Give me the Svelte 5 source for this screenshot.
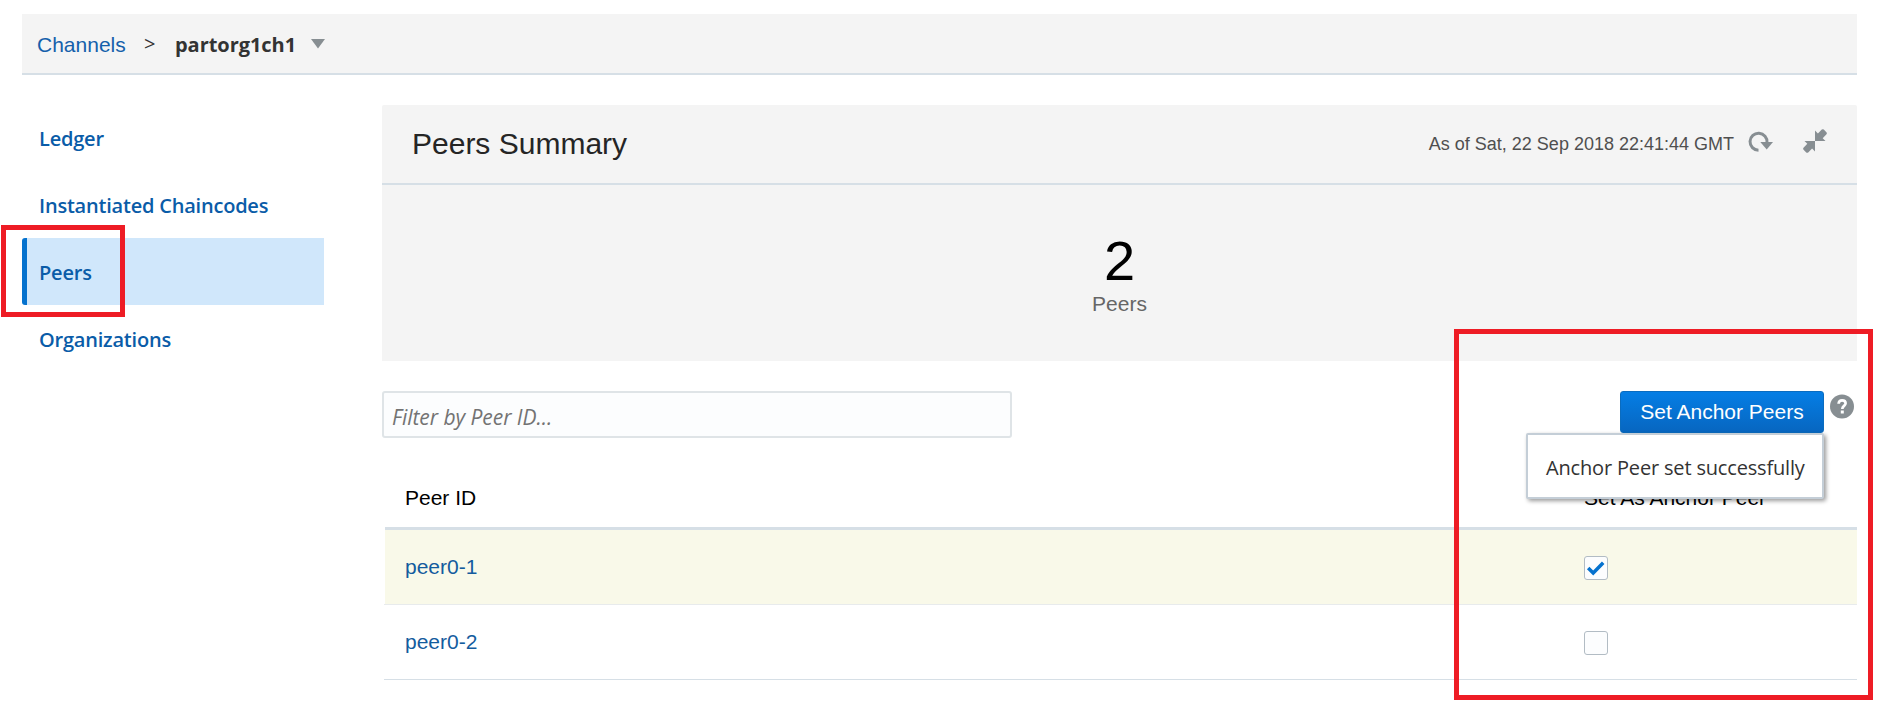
<script>
  const nav = ['Ledger', 'Instantiated Chaincodes', 'Peers', 'Organizations'];
  const active = 'Peers';
  const peers = [
    { id: 'peer0-1', anchor: true },
    { id: 'peer0-2', anchor: false }
  ];
</script>

<div class="page">
  <header class="crumbs">
    <a class="root" href="#channels">Channels</a>
    <span class="sep">&gt;</span>
    <span class="current">partorg1ch1</span>
    <svg class="caret" width="14" height="10" viewBox="0 0 14 10"><path d="M0 0H14L7 9.5Z" fill="#878e92" /></svg>
  </header>

  <div class="body">
    <nav>
      {#each nav as item}
        <a class="item" class:active={item === active} href="#{item}">{item}</a>
      {/each}
    </nav>

    <main>
      <section class="panel">
        <div class="panel-head">
          <h1>Peers Summary</h1>
          <span class="asof">As of Sat, 22 Sep 2018 22:41:44 GMT</span>
          <svg class="refresh" width="26" height="24" viewBox="0 0 26 24">
            <path d="M10.5 20.2A8.5 8.5 0 1 1 19 12.5" fill="none" stroke="#878e92" stroke-width="3" />
            <path d="M12.3 12H25L18.7 19.4Z" fill="#878e92" />
          </svg>
          <svg class="collapse" width="24" height="24" viewBox="0 0 24 24" fill="#878e92">
            <path d="M12 1.5V12H22.5L19.7 9.2L23.5 5.3Q24.3 4.3 23.4 3.3L20.8 .6Q19.8-.3 18.8.6L14.9 4.4Z" />
            <path d="M12 22.5V12H1.5L4.3 14.8L.5 18.7Q-.3 19.7.6 20.7L3.2 23.4Q4.2 24.3 5.2 23.4L9.1 19.6Z" />
          </svg>
        </div>
        <div class="stat">
          <div class="num">{peers.length}</div>
          <div class="label">Peers</div>
        </div>
      </section>

      <div class="tools">
        <input type="text" placeholder="Filter by Peer ID..." />
        <div class="action">
          <button>Set Anchor Peers</button>
          <div class="tip">Anchor Peer set successfully</div>
        </div>
        <svg class="help" width="24" height="25" viewBox="0 0 24 25">
          <circle cx="12" cy="12.5" r="12" fill="#878e92" />
          <path d="M8.6 9.7C8.7 7.4 10 6.3 12.1 6.3C14.2 6.3 15.6 7.5 15.6 9.3C15.6 11.8 12.3 12 12.3 14.9" fill="none" stroke="#fff" stroke-width="2.7" />
          <rect x="10.8" y="16.5" width="3" height="3" fill="#fff" />
        </svg>
      </div>

      <div class="table">
        <div class="row head">
          <span>Peer ID</span>
          <span>Set As Anchor Peer</span>
        </div>
        {#each peers as peer}
          <div class="row" class:selected={peer.anchor}>
            <a href="#{peer.id}">{peer.id}</a>
            <span class="box">
              {#if peer.anchor}
                <svg width="22" height="22" viewBox="1 1 22 22"><path d="M4.2 12.1L9.2 17L19.2 6.7" fill="none" stroke="#0572ce" stroke-width="3.5" /></svg>
              {/if}
            </span>
          </div>
        {/each}
      </div>
    </main>
  </div>

  <div class="mark mark-nav"></div>
  <div class="mark mark-anchor"></div>
</div>

<style>
  :global(body) { margin: 0; background: #fff; }
  .page {
    position: relative;
    box-sizing: border-box;
    width: 1880px;
    height: 710px;
    padding: 14px 23px 0 22px;
    overflow: hidden;
    font: 21px/24px "Liberation Sans", Arial, sans-serif;
    color: #000;
  }
  a { color: #145c9e; text-decoration: none; white-space: nowrap; }

  .crumbs {
    display: flex;
    align-items: center;
    box-sizing: border-box;
    height: 61px;
    padding: 0 0 0 15px;
    background: #f4f4f4;
    border-bottom: 2px solid #d6dfe6;
  }
  .root { color: #1560ab; width: 107px; padding-top: 2px; }
  .sep, .current { font-family: "Open Sans", "Noto Sans", sans-serif; font-size: 20px; color: #333; }
  .sep { width: 31px; padding-top: 1px; }
  .current { width: 136px; font-weight: 700; letter-spacing: -0.05px; padding-top: 2px; }

  .body { display: flex; padding-top: 30px; }
  nav { width: 302px; margin: -1px 58px 0 0; }
  .item {
    display: flex;
    align-items: center;
    box-sizing: border-box;
    height: 67px;
    padding: 3px 0 0 17px;
    font: 600 20px/24px "Open Sans", "Noto Sans", sans-serif;
    letter-spacing: -0.21px;
    color: #0a5ca8;
  }
  .active {
    padding-left: 12px;
    background: #d0e7fb;
    border-left: 5px solid #0572ce;
    border-radius: 3px 0 0 3px;
  }

  main { width: 1475px; }
  .panel { height: 256px; background: #f4f4f4; border-radius: 2px 2px 0 0; }
  .panel-head {
    display: flex;
    box-sizing: border-box;
    height: 80px;
    padding: 0 30px;
    border-bottom: 2px solid #d6dfe6;
  }
  h1 { margin: 21px auto 0 0; font-size: 30px; font-weight: 400; line-height: 36px; color: #252525; }
  .asof { margin: 27px 14px 0 0; font-size: 18px; color: #4f4f4f; white-space: nowrap; }
  .refresh { margin: 25px 29px 0 0; }
  .collapse { margin-top: 24px; }
  .stat { text-align: center; }
  .num { padding-top: 45px; font-size: 56px; line-height: 62px; }
  .label { color: #666; }

  .tools { display: flex; height: 77px; padding-top: 30px; }
  input {
    box-sizing: border-box;
    width: 630px;
    height: 47px;
    padding: 5px 8px 0;
    border: 2px solid #dfe4e7;
    border-radius: 3px;
    background: #fcfdfe;
    font: 20px "Open Sans", "Noto Sans", sans-serif;
  }
  input::placeholder { font: italic 21px "Open Sans", "Noto Sans", sans-serif; letter-spacing: -0.05px; color: #737373; opacity: 1; }
  .action { position: relative; width: 204px; margin-left: auto; }
  button {
    display: block;
    width: 204px;
    height: 42px;
    padding: 0 0 1px;
    border: 1px solid #0a6cc0;
    border-radius: 3px;
    background: linear-gradient(#057ee5, #0766c0);
    color: #fff;
    font: 21px "Liberation Sans", Arial, sans-serif;
  }
  .tip {
    position: absolute;
    top: 42px;
    right: 0;
    z-index: 2;
    box-sizing: border-box;
    width: 298px;
    height: 66px;
    padding: 21px 0 0 18px;
    border: 2px solid #c4ced7;
    border-radius: 2px;
    background: #fff;
    box-shadow: 2px 2px 4px rgba(0, 0, 0, 0.4);
    font: 20px/24px "Open Sans", "Noto Sans", sans-serif;
    letter-spacing: -0.17px;
    color: #333;
    white-space: nowrap;
  }
  .help { margin: 3px 3px 0 6px; }

  .table { margin-left: 2px; }
  .row {
    display: grid;
    grid-template-columns: 1179px 1fr;
    align-items: center;
    box-sizing: border-box;
    height: 75px;
    padding: 0 0 0 21px;
    border-bottom: 1px solid #d6dfe6;
  }
  .head { height: 62px; margin-left: 1px; padding: 0 0 0 20px; border-bottom: 3px solid #d6dfe6; }
  .selected { background: linear-gradient(90deg, #fff 1px, #f9f9e9 1px); border-bottom-color: #e8ebec; }
  .box {
    box-sizing: border-box;
    width: 24px;
    height: 24px;
    margin-top: 2px;
    border: 1px solid #b2bcc4;
    border-radius: 3px;
    background: #fcfdfe;
  }
  .box svg { display: block; }

  .mark { position: absolute; z-index: 3; box-sizing: border-box; border: 5px solid #ee1c25; pointer-events: none; }
  .mark-nav { left: 1px; top: 225px; width: 124px; height: 92px; }
  .mark-anchor { left: 1454px; top: 329px; width: 419px; height: 371px; }
</style>
